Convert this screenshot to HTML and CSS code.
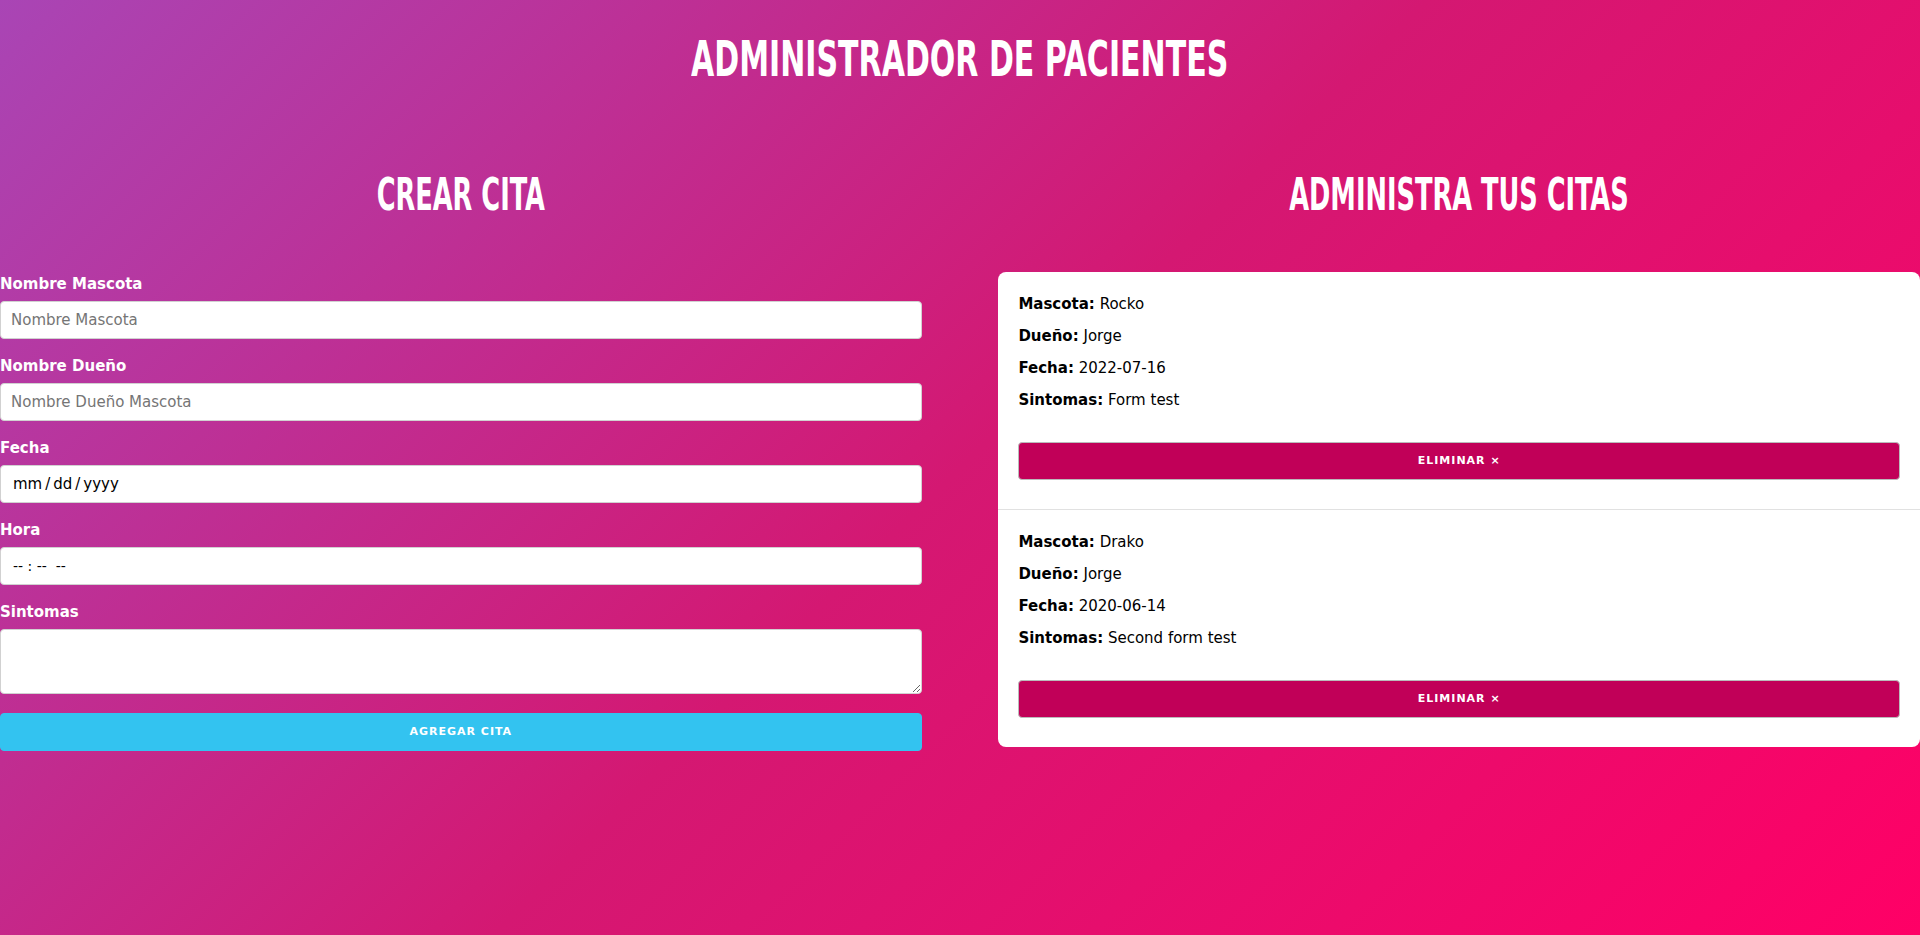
FILE: index.html
```html
<!DOCTYPE html>
<html lang="es">
<head>
<meta charset="utf-8">
<title>Administrador de Pacientes</title>
<link rel="stylesheet" href="styles.css">
</head>
<body>
  <h1 class="title"><span class="title-text">Administrador de Pacientes</span></h1>
  <div class="row">
    <section class="column">
      <h2 class="col-title"><span class="col-title-text">Crear Cita</span></h2>
      <form class="form">
        <label class="label" for="mascota">Nombre Mascota</label>
        <input class="field" id="mascota" type="text" placeholder="Nombre Mascota">
        <label class="label" for="propietario">Nombre Dueño</label>
        <input class="field" id="propietario" type="text" placeholder="Nombre Dueño Mascota">
        <label class="label" for="fecha">Fecha</label>
        <input class="field field-mask field-date" id="fecha" type="text" placeholder="mm&#8201;/&#8201;dd&#8201;/&#8201;yyyy">
        <label class="label" for="hora">Hora</label>
        <input class="field field-mask field-time" id="hora" type="text" placeholder="-- : --  --">
        <label class="label" for="sintomas">Sintomas</label>
        <textarea class="field field-area" id="sintomas"></textarea>
        <button type="button" class="btn btn-primary">Agregar Cita</button>
      </form>
    </section>
    <section class="column">
      <h2 class="col-title"><span class="col-title-text">Administra tus citas</span></h2>
      <div class="card">
        <div class="cita">
          <p class="cita-row"><strong>Mascota:</strong> Rocko</p>
          <p class="cita-row"><strong>Dueño:</strong> Jorge</p>
          <p class="cita-row"><strong>Fecha:</strong> 2022-07-16</p>
          <p class="cita-row"><strong>Sintomas:</strong> Form test</p>
          <button type="button" class="btn btn-delete">Eliminar &times;</button>
        </div>
        <div class="cita">
          <p class="cita-row"><strong>Mascota:</strong> Drako</p>
          <p class="cita-row"><strong>Dueño:</strong> Jorge</p>
          <p class="cita-row"><strong>Fecha:</strong> 2020-06-14</p>
          <p class="cita-row"><strong>Sintomas:</strong> Second form test</p>
          <button type="button" class="btn btn-delete">Eliminar &times;</button>
        </div>
      </div>
    </section>
  </div>
</body>
</html>
```

FILE: styles.css
```css
* {
  box-sizing: border-box;
}

html {
  height: 100%;
}

body {
  margin: 0;
  min-height: 100%;
  background: linear-gradient(135deg, #a945b5 0%, #d41872 50%, #ff0066 100%);
  font-family: "DejaVu Sans", sans-serif;
  font-size: 15px;
  line-height: 1.6;
  color: #222;
}

.title {
  margin: 0;
  padding-top: 34px;
  font-family: "DejaVu Sans Condensed", "DejaVu Sans", sans-serif;
  font-weight: 700;
  font-size: 50px;
  line-height: 51px;
  text-transform: uppercase;
  text-align: center;
  color: #fff;
}

.title-text,
.col-title-text {
  display: inline-block;
  transform: scaleX(0.667);
  transform-origin: center;
}

.col-title-text {
  transform: scaleX(0.648);
}

.row {
  display: grid;
  grid-template-columns: 48% 48%;
  column-gap: 4%;
  margin-top: 88px;
}

.col-title {
  margin: 0 0 55px;
  font-family: "DejaVu Sans Condensed", "DejaVu Sans", sans-serif;
  font-weight: 700;
  font-size: 44px;
  line-height: 44px;
  text-transform: uppercase;
  text-align: center;
  color: #fff;
}

.form {
  display: flex;
  flex-direction: column;
}

.label {
  display: block;
  margin-bottom: 5px;
  font-weight: 700;
  line-height: 24px;
  color: #fff;
}

.field {
  display: block;
  width: 100%;
  height: 38px;
  margin: 0 0 15px;
  padding: 6px 10px;
  border: 1px solid #d1d1d1;
  border-radius: 4px;
  background: #fff;
  font: inherit;
  color: #222;
  outline: none;
}

.field::placeholder {
  color: #757575;
  opacity: 1;
}

.field-mask {
  padding-left: 12px;
}

.field-mask::placeholder {
  color: #000;
}

.field-time::placeholder {
  font-size: 14px;
  white-space: pre;
}

.field-area {
  height: 65px;
  min-height: 65px;
  margin-bottom: 19px;
  resize: vertical;
}

.btn {
  display: block;
  width: 100%;
  height: 38px;
  padding: 0 30px;
  border-radius: 4px;
  font-family: "DejaVu Sans", sans-serif;
  font-size: 11px;
  font-weight: 700;
  line-height: 36px;
  letter-spacing: 1px;
  text-transform: uppercase;
  text-align: center;
  color: #fff;
  cursor: pointer;
}

.btn-primary {
  border: 1px solid #33c3f0;
  background: #33c3f0;
}

.card {
  background: #fff;
  border-radius: 8px;
  overflow: hidden;
}

.cita {
  padding: 20px 20px 19px;
  border-bottom: 1px solid #e1e1e1;
}

.cita:last-child {
  border-bottom: none;
}

.cita-row {
  margin: 0 0 8px;
  line-height: 24px;
  color: #000;
}

.cita-row strong {
  font-weight: 700;
}

.btn-delete {
  margin: 30px 0 10px;
  border: 1px solid #bbb;
  background: #c10058;
}
```
